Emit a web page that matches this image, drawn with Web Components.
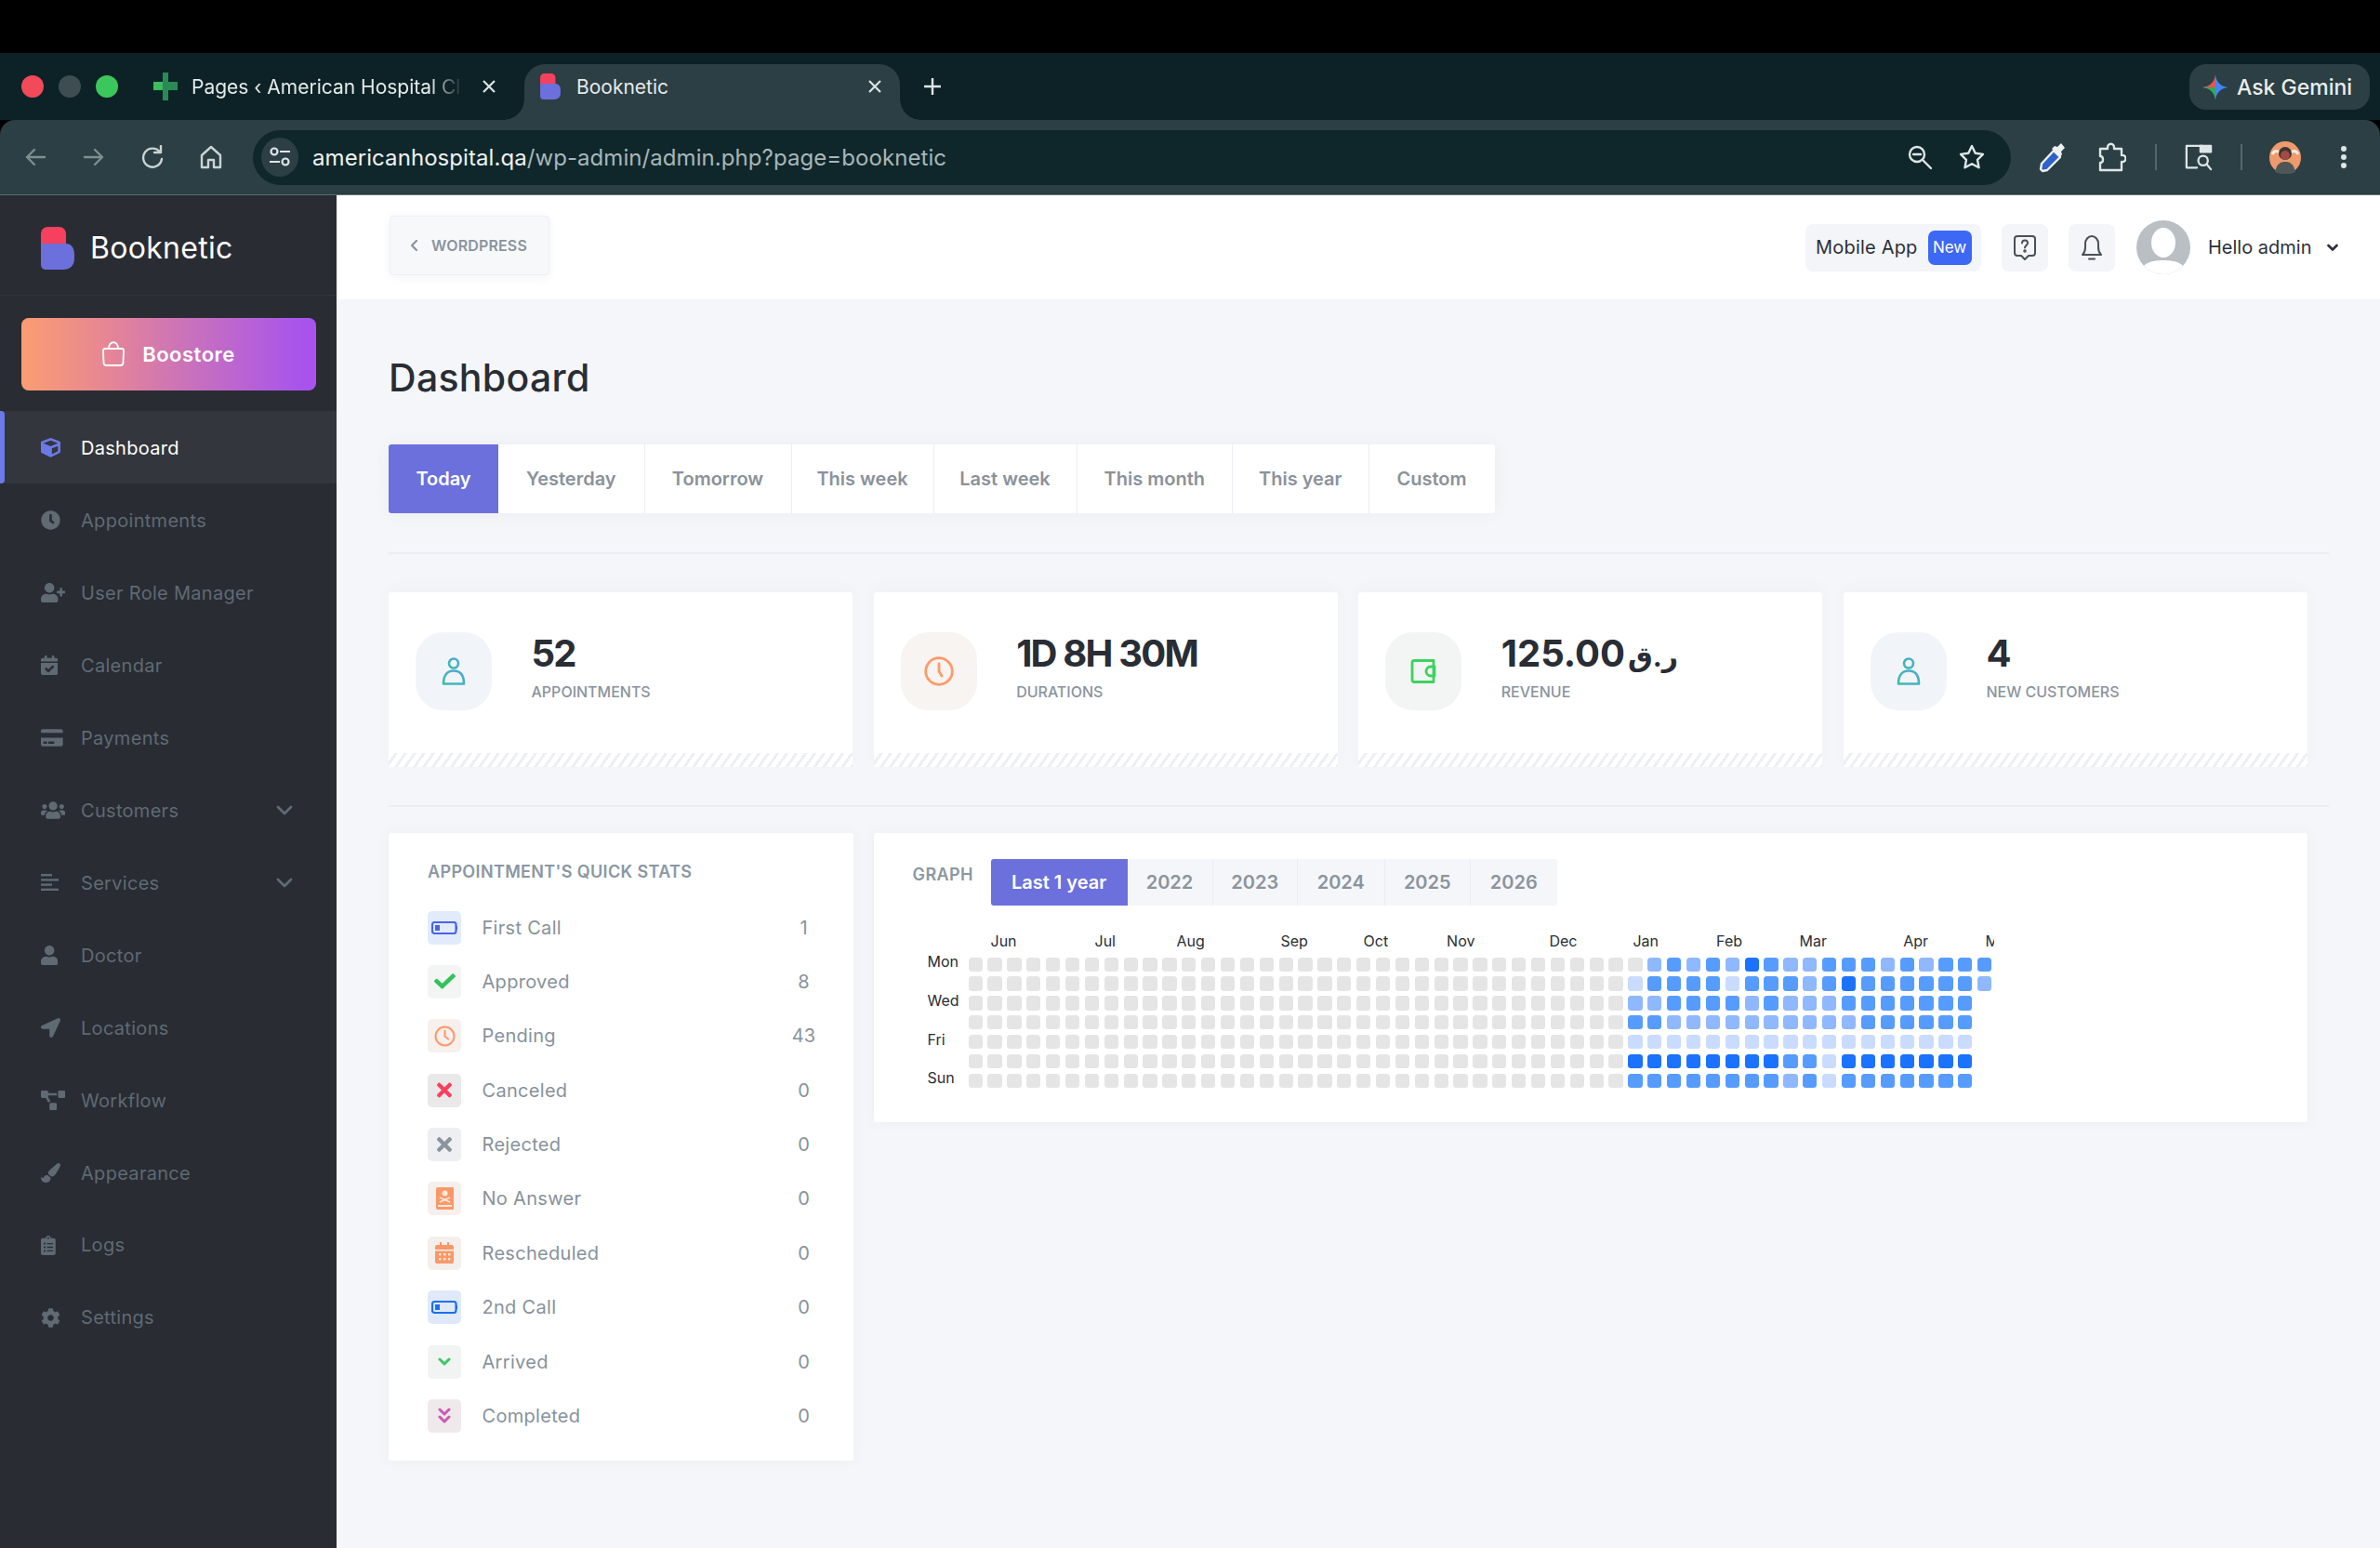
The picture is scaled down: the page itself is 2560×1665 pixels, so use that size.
<!DOCTYPE html>
<html lang="en">
<head>
<meta charset="utf-8">
<title>Booknetic</title>
<style>
  html, body { margin: 0; padding: 0; height: 100%; overflow: hidden; background: #f5f6f9; }
  body { font-family: Inter, "DejaVu Sans", sans-serif; }
  .page { display: flex; flex-direction: column; height: 1665px; width: 2560px; }
  .app { display: flex; flex: 1; min-height: 0; }
  .main { flex: 1; min-width: 0; display: flex; flex-direction: column; }
</style>
</head>
<body>
<div class="page">
  <browser-chrome></browser-chrome>
  <div class="app">
    <app-sidebar>
      <side-item icon="cube" active>Dashboard</side-item>
      <side-item icon="clock">Appointments</side-item>
      <side-item icon="userplus">User Role Manager</side-item>
      <side-item icon="calendar">Calendar</side-item>
      <side-item icon="card">Payments</side-item>
      <side-item icon="users" more>Customers</side-item>
      <side-item icon="lines" more>Services</side-item>
      <side-item icon="user">Doctor</side-item>
      <side-item icon="arrow">Locations</side-item>
      <side-item icon="flow">Workflow</side-item>
      <side-item icon="brush">Appearance</side-item>
      <side-item icon="logs">Logs</side-item>
      <side-item icon="cog">Settings</side-item>
    </app-sidebar>
    <div class="main">
      <top-bar></top-bar>
      <dash-board>
        <stat-card slot="cards" kind="person" tint="#f1f4f9"><span slot="value">52</span>APPOINTMENTS</stat-card>
        <stat-card slot="cards" kind="clock" tint="#f7f4f1"><span slot="value">1D 8H 30M</span>DURATIONS</stat-card>
        <stat-card slot="cards" kind="wallet" tint="#f3f5f5"><span slot="value" style="letter-spacing:-3.4px">125.00<span style="font-size:30px;letter-spacing:0;margin-left:3px">ر.ق</span></span>REVENUE</stat-card>
        <stat-card slot="cards" kind="person" tint="#f1f4f9"><span slot="value">4</span>NEW CUSTOMERS</stat-card>
        <quick-stats slot="stats">
          <stat-row kind="call1" tint="#e2ebfb" count="1">First Call</stat-row>
          <stat-row kind="check" tint="#f3f5f4" count="8">Approved</stat-row>
          <stat-row kind="clock" tint="#f7f0ed" count="43">Pending</stat-row>
          <stat-row kind="cancel" tint="#e9e9ea" count="0">Canceled</stat-row>
          <stat-row kind="reject" tint="#eeeff3" count="0">Rejected</stat-row>
          <stat-row kind="book" tint="#f5f0ee" count="0">No Answer</stat-row>
          <stat-row kind="cal" tint="#f5efec" count="0">Rescheduled</stat-row>
          <stat-row kind="call2" tint="#dfe9fa" count="0">2nd Call</stat-row>
          <stat-row kind="down" tint="#f2f4f3" count="0">Arrived</stat-row>
          <stat-row kind="down2" tint="#efe9ec" count="0">Completed</stat-row>
        </quick-stats>
        <heat-graph slot="graph"></heat-graph>
      </dash-board>
    </div>
  </div>
</div>
<script>
const fa = (w, d) => `<svg viewBox="0 0 ${w} 512" height="21" width="${w * 21 / 512}" fill="currentColor"><path d="${d}"/></svg>`;

const SIDE_ICONS = {
  cube: fa(512, 'M239.1 6.3l-208 78c-18.7 7-31.1 25-31.1 45v225.1c0 18.2 10.3 34.8 26.5 42.9l208 104c13.5 6.8 29.4 6.8 42.9 0l208-104c16.3-8.1 26.5-24.8 26.5-42.9V129.3c0-20-12.4-37.9-31.1-44.9l-208-78C262 2.2 250 2.2 239.1 6.3zM256 68.4l192 72v1.1l-192 78-192-78v-1.1l192-72zm32 356V275.5l160-65v133.9l-160 80z'),
  clock: fa(512, 'M256,8C119,8,8,119,8,256S119,504,256,504,504,393,504,256,393,8,256,8Zm92.49,313h0l-20,25a16,16,0,0,1-22.49,2.5h0l-67-49.72a40,40,0,0,1-15-31.23V112a16,16,0,0,1,16-16h32a16,16,0,0,1,16,16V256l58,42.5A16,16,0,0,1,348.49,321Z'),
  userplus: fa(640, 'M624 208h-64v-64c0-8.8-7.2-16-16-16h-32c-8.8 0-16 7.2-16 16v64h-64c-8.8 0-16 7.2-16 16v32c0 8.8 7.2 16 16 16h64v64c0 8.8 7.2 16 16 16h32c8.8 0 16-7.2 16-16v-64h64c8.8 0 16-7.2 16-16v-32c0-8.8-7.2-16-16-16zm-400 48c70.7 0 128-57.3 128-128S294.7 0 224 0 96 57.3 96 128s57.3 128 128 128zm89.6 32h-16.7c-22.2 10.2-46.9 16-72.9 16s-50.6-5.8-72.9-16h-16.7C60.2 288 0 348.2 0 422.4V464c0 26.5 21.5 48 48 48h352c26.5 0 48-21.5 48-48v-41.6c0-74.2-60.2-134.4-134.4-134.4z'),
  calendar: fa(448, 'M436 160H12c-6.6 0-12-5.4-12-12v-36c0-26.5 21.5-48 48-48h48V12c0-6.6 5.4-12 12-12h40c6.6 0 12 5.4 12 12v52h128V12c0-6.6 5.4-12 12-12h40c6.6 0 12 5.4 12 12v52h48c26.5 0 48 21.5 48 48v36c0 6.6-5.4 12-12 12zM12 192h424c6.6 0 12 5.4 12 12v260c0 26.5-21.5 48-48 48H48c-26.5 0-48-21.5-48-48V204c0-6.6 5.4-12 12-12zm333.3 95.9l-28.2-28.4c-4.7-4.7-12.3-4.7-17-.1L194.8 364l-45.8-46.2c-4.7-4.7-12.3-4.7-17-.1l-28.4 28.2c-4.7 4.7-4.7 12.3-.1 17l82.6 83.3c4.7 4.7 12.3 4.7 17 .1l142.1-140.9c4.7-4.7 4.7-12.3.1-17z'),
  card: fa(576, 'M0 432c0 26.5 21.5 48 48 48h480c26.5 0 48-21.5 48-48V256H0v176zm192-68c0-6.6 5.4-12 12-12h136c6.6 0 12 5.4 12 12v40c0 6.6-5.4 12-12 12H204c-6.6 0-12-5.4-12-12v-40zm-128 0c0-6.6 5.4-12 12-12h72c6.6 0 12 5.4 12 12v40c0 6.6-5.4 12-12 12H76c-6.6 0-12-5.4-12-12v-40zM576 80v48H0V80c0-26.5 21.5-48 48-48h480c26.5 0 48 21.5 48 48z'),
  users: fa(640, 'M96 224c35.3 0 64-28.7 64-64s-28.7-64-64-64-64 28.7-64 64 28.7 64 64 64zm448 0c35.3 0 64-28.7 64-64s-28.7-64-64-64-64 28.7-64 64 28.7 64 64 64zm32 32h-64c-17.6 0-33.5 7.1-45.1 18.6 40.3 22.1 68.9 62 75.1 109.4h66c17.7 0 32-14.3 32-32v-32c0-35.3-28.7-64-64-64zm-256 0c61.9 0 112-50.1 112-112S381.9 32 320 32 208 82.1 208 144s50.1 112 112 112zm76.8 32h-8.3c-20.8 10-43.9 16-68.5 16s-47.6-6-68.5-16h-8.3C179.6 288 128 339.6 128 403.2V432c0 26.5 21.5 48 48 48h288c26.5 0 48-21.5 48-48v-28.8c0-63.6-51.6-115.2-115.2-115.2zm-223.7-13.4C161.5 263.1 145.6 256 128 256H64c-35.3 0-64 28.7-64 64v32c0 17.7 14.3 32 32 32h65.9c6.3-47.4 34.9-87.3 75.2-109.4z'),
  lines: `<svg viewBox="0 0 19 21" height="21" width="19" fill="currentColor"><rect y="1" width="12" height="2.4"/><rect y="6.2" width="19" height="2.4"/><rect y="11.4" width="12" height="2.4"/><rect y="16.6" width="19" height="2.4"/></svg>`,
  user: fa(448, 'M224 256c70.7 0 128-57.3 128-128S294.7 0 224 0 96 57.3 96 128s57.3 128 128 128zm89.6 32h-16.7c-22.2 10.2-46.9 16-72.9 16s-50.6-5.8-72.9-16h-16.7C60.2 288 0 348.2 0 422.4V464c0 26.5 21.5 48 48 48h352c26.5 0 48-21.5 48-48v-41.6c0-74.2-60.2-134.4-134.4-134.4z'),
  arrow: fa(512, 'M444.52 3.52L28.74 195.42c-47.97 22.39-31.98 92.75 19.19 92.75h175.91v175.91c0 51.17 70.36 67.17 92.75 19.19l191.9-415.78c15.99-38.39-25.59-79.97-63.97-63.97z'),
  flow: fa(640, 'M384 320H256c-17.67 0-32 14.33-32 32v128c0 17.67 14.33 32 32 32h128c17.67 0 32-14.33 32-32V352c0-17.67-14.33-32-32-32zM192 32c0-17.67-14.33-32-32-32H32C14.33 0 0 14.33 0 32v128c0 17.67 14.33 32 32 32h95.72l73.16 128.04C211.98 300.98 232.4 288 256 288h.28L192 175.51V128h224V64H192V32zM608 0H480c-17.67 0-32 14.33-32 32v128c0 17.67 14.33 32 32 32h128c17.67 0 32-14.33 32-32V32c0-17.67-14.33-32-32-32z'),
  brush: fa(512, 'M167.02 309.34c-40.12 2.58-76.53 17.86-97.19 72.3-2.35 6.21-8 9.98-14.59 9.98-11.11 0-45.46-27.67-55.25-34.35C0 439.62 37.93 512 128 512c75.86 0 128-43.77 128-120.19 0-3.11-.65-6.08-.97-9.13l-88.01-73.34zM457.89 0c-15.16 0-29.37 6.71-40.21 16.45C213.27 199.05 192 203.34 192 257.09c0 13.7 3.25 26.76 8.73 38.7l63.82 53.18c7.21 1.8 14.64 3.03 22.39 3.03 62.11 0 98.11-45.47 211.16-256.46 7.38-14.35 13.9-29.85 13.9-45.99C512 20.64 486 0 457.89 0z'),
  logs: fa(384, 'M336 64h-80c0-35.3-28.7-64-64-64s-64 28.7-64 64H48C21.5 64 0 85.5 0 112v352c0 26.5 21.5 48 48 48h288c26.5 0 48-21.5 48-48V112c0-26.5-21.5-48-48-48zM96 424c-13.3 0-24-10.7-24-24s10.7-24 24-24 24 10.7 24 24-10.7 24-24 24zm0-96c-13.3 0-24-10.7-24-24s10.7-24 24-24 24 10.7 24 24-10.7 24-24 24zm0-96c-13.3 0-24-10.7-24-24s10.7-24 24-24 24 10.7 24 24-10.7 24-24 24zm96-192c13.3 0 24 10.7 24 24s-10.7 24-24 24-24-10.7-24-24 10.7-24 24-24zm128 368c0 4.4-3.6 8-8 8H168c-4.4 0-8-3.6-8-8v-16c0-4.4 3.6-8 8-8h144c4.4 0 8 3.6 8 8v16zm0-96c0 4.4-3.6 8-8 8H168c-4.4 0-8-3.6-8-8v-16c0-4.4 3.6-8 8-8h144c4.4 0 8 3.6 8 8v16zm0-96c0 4.4-3.6 8-8 8H168c-4.4 0-8-3.6-8-8v-16c0-4.4 3.6-8 8-8h144c4.4 0 8 3.6 8 8v16z'),
  cog: fa(512, 'M487.4 315.7l-42.6-24.6c4.3-23.2 4.3-47 0-70.2l42.6-24.6c4.9-2.8 7.1-8.6 5.5-14-11.1-35.6-30-67.8-54.7-94.6-3.8-4.1-10-5.1-14.8-2.3L380.8 110c-17.9-15.4-38.5-27.3-60.8-35.1V25.8c0-5.6-3.9-10.5-9.4-11.7-36.7-8.2-74.3-7.8-109.2 0-5.5 1.2-9.4 6.1-9.4 11.7V75c-22.2 7.9-42.8 19.8-60.8 35.1L88.7 85.5c-4.9-2.8-11-1.9-14.8 2.3-24.7 26.7-43.6 58.9-54.7 94.6-1.7 5.4.6 11.2 5.5 14L67.3 221c-4.3 23.2-4.3 47 0 70.2l-42.6 24.6c-4.9 2.8-7.1 8.6-5.5 14 11.1 35.6 30 67.8 54.7 94.6 3.8 4.1 10 5.1 14.8 2.3l42.6-24.6c17.9 15.4 38.5 27.3 60.8 35.1v49.2c0 5.6 3.9 10.5 9.4 11.7 36.7 8.2 74.3 7.8 109.2 0 5.5-1.2 9.4-6.1 9.4-11.7v-49.2c22.2-7.9 42.8-19.8 60.8-35.1l42.6 24.6c4.9 2.8 11 1.9 14.8-2.3 24.7-26.7 43.6-58.9 54.7-94.6 1.5-5.5-.7-11.3-5.6-14.1zM256 336c-44.1 0-80-35.9-80-80s35.9-80 80-80 80 35.9 80 80-35.9 80-80 80z')
};

const LOGO = `<svg viewBox="0 0 36 46" width="36" height="46"><path d="M0 18V8C0 3 3 0 8 0h11c5 0 8 3 8 8v10z" fill="#f5405f"/><path d="M0 18h27c6 0 9 5 9 12v4c0 8-5 12-12 12H6c-4 0-6-2-6-6z" fill="#6c70dc"/></svg>`;

class BrowserChrome extends HTMLElement {
  constructor() {
    super();
    this.attachShadow({ mode: 'open' });
  }

  connectedCallback() {
    const stroke = 'fill="none" stroke="currentColor" stroke-width="2.4" stroke-linecap="round" stroke-linejoin="round"';
    this.shadowRoot.innerHTML = `
      <style>
        :host { display: block; font-family: Inter, "DejaVu Sans", sans-serif; background: #000; padding-top: 57px; }
        .strip { height: 72px; background: #0d2226; display: flex; align-items: flex-end; box-sizing: border-box; position: relative; }
        .lights { display: flex; gap: 16px; margin: 0 0 24px 23px; }
        .lights i { width: 24px; height: 24px; border-radius: 50%; }
        .tab { height: 60px; display: flex; align-items: center; box-sizing: border-box; padding-bottom: 12px; color: #e4e9ea; font-size: 21px; position: relative; }
        .tab.one { width: 424px; margin-left: 13px; padding-left: 25px; }
        .tab.one .label { width: 292px; white-space: nowrap; margin-left: 15px;
          -webkit-mask-image: linear-gradient(90deg, #000 88%, transparent); }
        .tab.one .x { margin-left: 16px; }
        .tab.two { width: 404px; background: #2b3f44; border-radius: 22px 22px 0 0; padding-left: 17px; }
        .tab.two .label { width: 309px; margin-left: 17px; }
        .tab.two::before, .tab.two::after { content: ''; position: absolute; bottom: 0; width: 22px; height: 22px; }
        .tab.two::before { left: -22px; background: radial-gradient(circle at 0 0, transparent 21.5px, #2b3f44 22px); }
        .tab.two::after { right: -22px; background: radial-gradient(circle at 100% 0, transparent 21.5px, #2b3f44 22px); }
        .x { width: 24px; display: flex; justify-content: center; }
        .plus { margin: 0 0 12px 25px; width: 24px; height: 48px; display: flex; align-items: center; color: #dfe5e6; }
        .gemini { position: absolute; right: 11px; top: 12px; height: 49px; width: 194px; border-radius: 18px; background: #2b3f44; display: flex; align-items: center;
          box-sizing: border-box; padding-left: 14px; gap: 9px; color: #e9eded; font-size: 23px; font-weight: 500; }
        .bar { height: 81px; box-sizing: border-box; background: #2b3f44; border-radius: 16px 16px 0 0; border-bottom: 1px solid #5d6b6e; display: flex; align-items: center; padding-left: 6px; color: #cbd3d4; margin-top: 0; }
        .nav { width: 63px; display: flex; justify-content: center; }
        .nav.dim { color: #7f8e91; }
        .url { margin-left: 14px; width: 1891px; height: 59px; box-sizing: border-box; background: #0f272b; border-radius: 30px; display: flex; align-items: center; padding: 0 27px 0 9px; }
        .info { width: 40px; height: 42px; border-radius: 50%; background: #2b3f44; display: flex; align-items: center; justify-content: center; color: #dfe5e6; }
        .addr { margin-left: 15px; font-size: 24px; letter-spacing: .07px; color: #a9b6b8; flex: 1; white-space: nowrap; }
        .addr b { font-weight: 400; color: #eef2f2; }
        .url .ic { margin-left: 26px; width: 30px; display: flex; justify-content: center; color: #dfe5e6; }
        .tool { display: flex; justify-content: center; color: #dfe5e6; }
        .div { width: 2px; height: 28px; background: #55666a; }
      </style>
      <div class="strip">
        <div class="lights"><i style="background:#f2495b"></i><i style="background:#3e4d52"></i><i style="background:#3cc75c"></i></div>
        <div class="tab one">
          <svg width="26" height="30" viewBox="0 0 26 30"><path d="M10 0h6v10h10v9H16v11h-6V19H0v-9h10z" fill="#3dbb5f"/><path d="M10 0h6v10h10v9H16v11h-6V19z" fill="#2a8a55"/></svg>
          <span class="label">Pages ‹ American Hospital Cl</span>
          <span class="x"><svg width="16" height="16" viewBox="0 0 16 16" fill="none" stroke="#dde3e4" stroke-width="2.2"><path d="M2 2l12 12M14 2L2 14"/></svg></span>
        </div>
        <div class="tab two">
          <svg viewBox="0 0 36 46" width="22" height="28"><path d="M0 18V8C0 3 3 0 8 0h11c5 0 8 3 8 8v10z" fill="#f5405f"/><path d="M0 18h27c6 0 9 5 9 12v4c0 8-5 12-12 12H6c-4 0-6-2-6-6z" fill="#6c70dc"/></svg>
          <span class="label">Booknetic</span>
          <span class="x"><svg width="16" height="16" viewBox="0 0 16 16" fill="none" stroke="#dde3e4" stroke-width="2.2"><path d="M2 2l12 12M14 2L2 14"/></svg></span>
        </div>
        <div class="plus"><svg width="20" height="20" viewBox="0 0 20 20" fill="none" stroke="currentColor" stroke-width="2.4"><path d="M10 1v18M1 10h18"/></svg></div>
        <div class="gemini">
          <svg width="28" height="28" viewBox="0 0 28 28"><path d="M14 0C14.5 8 20 13.5 28 14 20 14.5 14.5 20 14 28 13.5 20 8 14.5 0 14 8 13.5 13.500 8 14 0z" fill="#4285f4"/><path d="M14 0C13.500 8 8 13.500 0 14h14z" fill="#e9544a"/><path d="M0 14c8 .5 13.500 6 14 14V14z" fill="#34a853"/></svg>
          <span>Ask Gemini</span>
        </div>
      </div>
      <div class="bar">
        <span class="nav dim"><svg width="24" height="24" viewBox="0 0 24 24" ${stroke}><path d="M22 12H3M11 4l-8 8 8 8"/></svg></span>
        <span class="nav dim"><svg width="24" height="24" viewBox="0 0 24 24" ${stroke}><path d="M2 12h19M13 4l8 8-8 8"/></svg></span>
        <span class="nav"><svg width="24" height="26" viewBox="0 0 24 26" ${stroke}><path d="M20 7.500A10 10 0 1 0 22 15M21 1v7h-7"/></svg></span>
        <span class="nav"><svg width="24" height="26" viewBox="0 0 24 26" ${stroke}><path d="M2 11L12 2l10 9v13h-7v-8H9v8H2z"/></svg></span>
        <div class="url">
          <span class="info"><svg width="26" height="26" viewBox="0 0 26 26" fill="none" stroke="currentColor" stroke-width="2.2"><circle cx="7" cy="7" r="3.500"/><path d="M13 7h11M2 18h11"/><circle cx="19" cy="18" r="3.500"/></svg></span>
          <span class="addr"><b>americanhospital.qa</b>/wp-admin/admin.php?page=booknetic</span>
          <span class="ic"><svg width="28" height="28" viewBox="0 0 28 28" ${stroke}><circle cx="11" cy="11" r="8"/><path d="M7 11h8M17 17l9 9"/></svg></span>
          <span class="ic"><svg width="28" height="28" viewBox="0 0 28 28" ${stroke}><path d="M14 2l3.700 7.800 8.300 1.100-6 5.900 1.500 8.500L14 21.200 6.500 25.300 8 16.800 2 10.900l8.300-1.100z"/></svg></span>
        </div>
        <span class="tool" style="margin-left:29px;width:32px"><svg width="30" height="34" viewBox="0 0 30 34" fill="none"><path d="M4 32l-2-2 1-6L16 10l7 7L9 31z" fill="#2f62c9" stroke="#eef1f2" stroke-width="2.4" stroke-linejoin="round"/><path d="M14 8l9 9 2-3-1-3 4-4-4-5-4 4-3-1z" fill="#eef1f2"/></svg></span>
        <span class="tool" style="margin-left:32px;width:32px"><svg width="30" height="32" viewBox="0 0 30 32" ${stroke}><path d="M2 7h8c-1-7 8-7 7 0h8v7c6-1 6 8 0 7v9H2v-8c4 0 4-7 0-7z"/></svg></span>
        <span class="div" style="margin-left:30px"></span>
        <span class="tool" style="margin-left:30px;width:30px"><svg width="32" height="32" viewBox="0 0 32 32" ${stroke}><path d="M14 28H2V3h18"/><path d="M18 3h12v7H18z" fill="currentColor"/><circle cx="21" cy="20" r="5.500"/><path d="M25 24l5 6"/></svg></span>
        <span class="div" style="margin-left:30px"></span>
        <span class="tool" style="margin-left:29px;width:34px"><svg width="34" height="35" viewBox="0 0 34 35"><ellipse cx="17" cy="17.500" rx="17" ry="17.500" fill="#ee9a6c"/><path d="M3 14c3-6 8-3 9 0M31 14c-3-6-8-3-9 0" stroke="#fbe9dd" stroke-width="3" fill="none"/><circle cx="17" cy="13" r="7" fill="#3d3431"/><circle cx="17" cy="15" r="5" fill="#a24a43"/><path d="M6 33c2-9 6-11 11-11s9 2 11 11c-6 3-16 3-22 0z" fill="#4e5658"/></svg></span>
        <span class="tool" style="margin-left:36px;width:20px"><svg width="8" height="26" viewBox="0 0 8 26" fill="currentColor"><circle cx="4" cy="4" r="3"/><circle cx="4" cy="13" r="3"/><circle cx="4" cy="22" r="3"/></svg></span>
      </div>
    `;
  }
}

class AppSidebar extends HTMLElement {
  constructor() {
    super();
    this.attachShadow({ mode: 'open' });
  }

  connectedCallback() {
    this.shadowRoot.innerHTML = `
      <style>
        :host { display: block; width: 362px; flex: none; background: #292c33; }
        .head { height: 108px; box-sizing: border-box; border-bottom: 1px solid #32353c; display: flex; align-items: center; padding: 6px 0 0 44px; gap: 17px; color: #fff; font-size: 32px; letter-spacing: .3px; }
        .boost { margin: 24px 22px 22px 23px; height: 78px; border-radius: 8px; background: linear-gradient(90deg, #fb9d72, #e58596 30%, #c66fc0 60%, #a854ec 95%);
          display: flex; align-items: center; justify-content: center; gap: 19px; color: #fff; font-size: 22px; font-weight: 600; letter-spacing: .5px; padding-bottom: 1px; box-sizing: border-box; }
        .items { display: flex; flex-direction: column; }
      </style>
      <div class="head">${LOGO}<span>Booknetic</span></div>
      <div class="boost">
        <svg width="24" height="27" viewBox="0 0 24 27" fill="none" stroke="#fff" stroke-width="1.800" stroke-linejoin="round"><path d="M3 8h18q2 0 2 2l-.5 13q0 3-3 3h-15q-3 0-3-3L1 10q0-2 2-2zM7 8c0-9 10-9 10 0"/></svg>
        <span>Boostore</span>
      </div>
      <div class="items"><slot></slot></div>
    `;
  }
}

class SideItem extends HTMLElement {
  constructor() {
    super();
    this.attachShadow({ mode: 'open' });
  }

  connectedCallback() {
    const more = this.hasAttribute('more');
    this.shadowRoot.innerHTML = `
      <style>
        :host { display: flex; height: 77.960px; align-items: center; box-sizing: border-box; padding: 2px 0 0 44px; position: relative;
          color: #5f6a73; font-size: 20px; letter-spacing: .3px; }
        :host([active]) { background: #33363c; color: #fff; }
        :host([active])::before { content: ''; position: absolute; left: 0; top: 0; bottom: 0; width: 5px; background: #6c7ae8; border-radius: 0 4px 4px 0; }
        .icon { width: 43px; flex: none; display: flex; align-items: center; }
        :host([active]) .icon { color: #6c7ae8; }
        .text { flex: 1; }
        .chev { margin-right: 47px; display: flex; }
      </style>
      <span class="icon">${SIDE_ICONS[this.getAttribute('icon')]}</span>
      <span class="text"><slot></slot></span>
      ${more ? '<span class="chev"><svg width="18" height="11" viewBox="0 0 18 11" fill="none" stroke="currentColor" stroke-width="2.800" stroke-linecap="round" stroke-linejoin="round"><path d="M2 2l7 7 7-7"/></svg></span>' : ''}
    `;
  }
}

class TopBar extends HTMLElement {
  constructor() {
    super();
    this.attachShadow({ mode: 'open' });
  }

  connectedCallback() {
    this.shadowRoot.innerHTML = `
      <style>
        :host { display: flex; height: 112px; flex: none; align-items: center; box-sizing: border-box; background: #fff; padding: 0 45px 0 57px; font-size: 20px; color: #2c3038; }
        .wp { width: 172px; height: 64px; box-sizing: border-box; margin-top: -5px; background: #f7f8fa; border: 1px solid #eef0f4; border-radius: 4px; box-shadow: 0 2px 10px rgba(80,90,120,.07);
          display: flex; align-items: center; padding-left: 22px; gap: 15px; color: #8a949e; font-size: 16px; font-weight: 600; letter-spacing: .15px; }
        .right { margin-left: auto; display: flex; align-items: center; }
        .app { height: 51px; width: 189px; box-sizing: border-box; border-radius: 8px; background: #f3f5f9; display: flex; align-items: center; padding-left: 11px; letter-spacing: .2px; white-space: nowrap; }
        .new { margin-left: 11px; width: 47px; height: 37px; border-radius: 7px; background: #3d67f5; color: #fff; font-size: 17px; display: flex; align-items: center; justify-content: center; letter-spacing: 0; }
        .sq { width: 50px; height: 51px; margin-left: 22px; border-radius: 8px; background: #f3f5f9; display: flex; align-items: center; justify-content: center; color: #4a5058; }
        .avatar { margin-left: 23px; width: 58px; height: 58px; display: flex; }
        .hello { margin-left: 19px; width: 115px; white-space: nowrap; }
        .caret { margin-left: 13px; display: flex; }
      </style>
      <div class="wp">
        <svg width="7" height="12" viewBox="0 0 7 12" fill="none" stroke="currentColor" stroke-width="2.200" stroke-linecap="round" stroke-linejoin="round"><path d="M6 1L1 6l5 5"/></svg>
        <span>WORDPRESS</span>
      </div>
      <div class="right">
        <div class="app"><span>Mobile App</span><span class="new">New</span></div>
        <div class="sq"><svg width="24" height="28" viewBox="0 0 24 28" fill="none" stroke="currentColor" stroke-width="2" stroke-linejoin="round"><path d="M4 2h16q3 0 3 3v15q0 3-3 3h-4l-4 4-4-4H4q-3 0-3-3V5q0-3 3-3z"/><path d="M9 9.500c0-4 6-4 6 0 0 2.500-3 2.500-3 5" stroke-linecap="round"/><circle cx="12" cy="18" r=".8"/></svg></div>
        <div class="sq"><svg width="24" height="28" viewBox="0 0 24 28" fill="none" stroke="currentColor" stroke-width="2" stroke-linecap="round" stroke-linejoin="round"><path d="M2 22c2-2 3-4 3-8V10c0-4 3-8 7-8s7 4 7 8v4c0 4 1 6 3 8z"/><path d="M9 26.500h6"/></svg></div>
        <div class="avatar"><svg viewBox="0 0 58 58" width="58" height="58"><defs><clipPath id="cl"><circle cx="29" cy="29" r="29"/></clipPath></defs><circle cx="29" cy="29" r="29" fill="#b9bfc3"/><g clip-path="url(#cl)" fill="#fff"><ellipse cx="29" cy="24" rx="13" ry="16"/><path d="M4 58c1-12 12-15 25-15s24 3 25 15z"/></g></svg></div>
        <span class="hello">Hello admin</span>
        <span class="caret"><svg width="12" height="9" viewBox="0 0 12 9" fill="none" stroke="#2c3038" stroke-width="2.600" stroke-linecap="round" stroke-linejoin="round"><path d="M1.500 2l4.500 4.500L10.500 2"/></svg></span>
      </div>
    `;
  }
}

class DashBoard extends HTMLElement {
  constructor() {
    super();
    this.attachShadow({ mode: 'open' });
  }

  connectedCallback() {
    const ranges = [['Today', 118], ['Yesterday', 157.5], ['Tomorrow', 158], ['This week', 153], ['Last week', 154], ['This month', 167.5], ['This year', 146.5], ['Custom', 135]];
    this.shadowRoot.innerHTML = `
      <style>
        :host { display: block; box-sizing: border-box; padding: 54px 55px 0 56px; flex: 1; min-height: 0; background: #f5f6f9; color: #292d35; }
        h1 { margin: 0; font-size: 41px; line-height: 60px; font-weight: 500; letter-spacing: .3px; }
        .ranges { margin-top: 42px; display: inline-grid; grid-template-columns: ${ranges.map(r => r[1] + 'px').join(' ')}; height: 74px; background: #fff; border-radius: 3px; box-shadow: 0 0 18px rgba(80,90,130,.06); vertical-align: top; }
        .ranges span { display: flex; align-items: center; justify-content: center; border-right: 1px solid #eaedf5; font-size: 20px; font-weight: 600; color: #8a929b; }
        .ranges span:last-child { border-right: 0; }
        .ranges .on { background: #6c70dc; color: #fff; border-radius: 3px 0 0 3px; border-right: 0; }
        .sep { height: 1.500px; background: #e9eef6; }
        .sep.a { margin-top: 42px; }
        .cards { margin: 41px 23px 0 0; display: grid; grid-template-columns: repeat(4, 1fr); gap: 22.500px; height: 188px; }
        .sep.b { margin-top: 41.500px; }
        .lower { margin: 28px 23px 0 0; display: grid; grid-template-columns: 499.500px 1fr; gap: 22.500px; align-items: start; }
      </style>
      <h1>Dashboard</h1>
      <div class="ranges">${ranges.map((r, i) => `<span class="${i === 0 ? 'on' : ''}">${r[0]}</span>`).join('')}</div>
      <div class="sep a"></div>
      <div class="cards"><slot name="cards"></slot></div>
      <div class="sep b"></div>
      <div class="lower"><slot name="stats"></slot><slot name="graph"></slot></div>
    `;
  }
}

class StatCard extends HTMLElement {
  constructor() {
    super();
    this.attachShadow({ mode: 'open' });
  }

  icon() {
    const kind = this.getAttribute('kind');
    if (kind === 'clock') {
      return `<svg width="32" height="32" viewBox="0 0 32 32" fill="none" stroke="#ff9a6a" stroke-width="2.800" stroke-linecap="round"><circle cx="16" cy="16" r="14.300"/><path d="M16 8v8l3 5"/></svg>`;
    }
    if (kind === 'wallet') {
      return `<svg width="28" height="26" viewBox="0 0 28 26" fill="none" stroke="#3dd25e" stroke-width="2.800" stroke-linejoin="round"><path d="M2 3.500q0-2 2-2h21v23H4q-2 0-2-2z"/><path d="M26 8h-4a4.500 4.500 0 0 0 0 10h4z"/></svg>`;
    }
    return `<svg width="26" height="30" viewBox="0 0 26 30" fill="none" stroke-width="2.600" stroke-linejoin="round"><defs><linearGradient id="pg" x1="0" y1="1" x2="1" y2="0"><stop offset="0" stop-color="#3cbcae"/><stop offset="1" stop-color="#4ea8d2"/></linearGradient></defs><circle cx="13" cy="6.500" r="5" stroke="url(#pg)"/><path d="M2 28.500c0-9 4-14 11-14s11 5 11 14z" stroke="url(#pg)"/></svg>`;
  }

  connectedCallback() {
    this.shadowRoot.innerHTML = `
      <style>
        :host { display: block; position: relative; background: #fff; border-radius: 3px 3px 0 0; box-shadow: 0 -6px 14px rgba(80,90,130,.03); font-family: Inter, "DejaVu Sans", sans-serif; }
        .body { height: 173.500px; box-sizing: border-box; display: flex; padding: 43px 0 0 29px; }
        .tile { width: 82px; height: 84px; flex: none; border-radius: 30px; background: ${this.getAttribute('tint')}; display: flex; align-items: center; justify-content: center; }
        .text { margin-left: 42.500px; display: flex; flex-direction: column; }
        .value { height: 46px; line-height: 46px; font-size: 40px; font-weight: 700; letter-spacing: -1.800px; color: #292d35; white-space: nowrap; }
        .label { margin-top: 7px; font-size: 16px; line-height: 22px; font-weight: 500; color: #8a949e; }
        .hatch { height: 14.500px; background: repeating-linear-gradient(125deg, #fff 0 5.200px, #eeeff2 5.200px 8.200px); }
      </style>
      <div class="body">
        <div class="tile">${this.icon()}</div>
        <div class="text">
          <div class="value"><slot name="value"></slot></div>
          <div class="label"><slot></slot></div>
        </div>
      </div>
      <div class="hatch"></div>
    `;
  }
}

class QuickStats extends HTMLElement {
  constructor() {
    super();
    this.attachShadow({ mode: 'open' });
  }

  connectedCallback() {
    this.shadowRoot.innerHTML = `
      <style>
        :host { display: block; box-sizing: border-box; height: 675px; background: #fff; border-radius: 3px; padding: 29px 0 0 42px; box-shadow: 0 0 16px rgba(80,90,130,.05); }
        h2 { margin: 0 0 29px; font-size: 18px; line-height: 26px; font-weight: 600; color: #8a97a3; letter-spacing: .35px; }
        .rows { display: flex; flex-direction: column; gap: 22.400px; }
      </style>
      <h2>APPOINTMENT'S QUICK STATS</h2>
      <div class="rows"><slot></slot></div>
    `;
  }
}

class StatRow extends HTMLElement {
  constructor() {
    super();
    this.attachShadow({ mode: 'open' });
  }

  icon() {
    const glyphs = {
      call1: `<svg width="28" height="14" viewBox="0 0 28 14"><rect x="1" y="1" width="25.500" height="12" rx="2.500" fill="none" stroke="#4a63e8" stroke-width="2.200"/><rect x="4" y="4" width="5" height="6" fill="#4a63e8"/><rect x="26" y="5" width="2" height="4" fill="#4a63e8"/></svg>`,
      call2: `<svg width="28" height="14" viewBox="0 0 28 14"><rect x="1" y="1" width="25.500" height="12" rx="2.500" fill="none" stroke="#1a6ff0" stroke-width="2.200"/><rect x="4" y="4" width="5" height="6" fill="#1a6ff0"/><rect x="26" y="5" width="2" height="4" fill="#1a6ff0"/></svg>`,
      check: `<svg width="23" height="17" viewBox="0 0 512 400" preserveAspectRatio="none" fill="#35c25a"><path transform="translate(0 -58)" d="M173.898 439.404l-166.4-166.4c-9.997-9.997-9.997-26.206 0-36.204l36.203-36.204c9.997-9.998 26.207-9.998 36.204 0L192 312.69 432.095 72.596c9.997-9.997 26.207-9.997 36.204 0l36.203 36.204c9.997 9.997 9.997 26.206 0 36.204l-294.4 294.401c-9.998 9.997-26.207 9.997-36.204-.001z"/></svg>`,
      clock: `<svg width="23" height="23" viewBox="0 0 23 23" fill="none" stroke="#ff9a6a" stroke-width="2" stroke-linecap="round"><circle cx="11.500" cy="11.500" r="10"/><path d="M11.500 5.500v6l3.500 3"/></svg>`,
      cancel: `<svg width="16" height="17" viewBox="0 0 352 352" fill="#f9405f"><path transform="translate(0 -80)" d="M242.72 256l100.07-100.07c12.28-12.28 12.28-32.19 0-44.48l-22.24-22.24c-12.28-12.28-32.19-12.28-44.48 0L176 189.28 75.93 89.21c-12.28-12.28-32.19-12.28-44.48 0L9.21 111.45c-12.28 12.28-12.28 32.19 0 44.48L109.28 256 9.21 356.07c-12.28 12.28-12.28 32.19 0 44.48l22.24 22.24c12.28 12.28 32.2 12.28 44.48 0L176 322.72l100.07 100.07c12.28 12.28 32.2 12.28 44.48 0l22.24-22.24c12.28-12.28 12.28-32.19 0-44.48L242.72 256z"/></svg>`,
      reject: `<svg width="16" height="16" viewBox="0 0 352 352" fill="#8a949e"><path transform="translate(0 -80)" d="M242.72 256l100.07-100.07c12.28-12.28 12.28-32.19 0-44.48l-22.24-22.24c-12.28-12.28-32.19-12.28-44.48 0L176 189.28 75.93 89.21c-12.28-12.28-32.19-12.28-44.48 0L9.21 111.45c-12.28 12.28-12.28 32.19 0 44.48L109.28 256 9.21 356.07c-12.28 12.28-12.28 32.19 0 44.48l22.24 22.24c12.28 12.28 32.2 12.28 44.48 0L176 322.72l100.07 100.07c12.28 12.28 32.2 12.28 44.48 0l22.24-22.24c12.28-12.28 12.28-32.19 0-44.48L242.72 256z"/></svg>`,
      book: `<svg width="20" height="24" viewBox="0 0 20 24"><path d="M1 2q0-2 2-2h17v24H3q-2 0-2-2z" fill="#fb9868"/><circle cx="10.500" cy="6.500" r="3" fill="#fdeadf"/><path d="M5 11l11 5M16 11L5 16" stroke="#fdeadf" stroke-width="1.500"/><rect x="3" y="19" width="15" height="2" fill="#fdeadf"/></svg>`,
      cal: `<svg width="20" height="23" viewBox="0 0 20 23"><path d="M5 0h2v3h6V0h2v3h3q2 0 2 2v3H0V5q0-2 2-2h3zM0 9.500h20V21q0 2-2 2H2q-2 0-2-2z" fill="#fb9868"/><g fill="#fdeadf"><rect x="4" y="12" width="2.400" height="2.400"/><rect x="9" y="12" width="2.400" height="2.400"/><rect x="14" y="12" width="2.400" height="2.400"/><rect x="4" y="17" width="2.400" height="2.400"/><rect x="9" y="17" width="2.400" height="2.400"/><rect x="14" y="17" width="2.400" height="2.400"/></g></svg>`,
      down: `<svg width="14" height="10" viewBox="0 0 14 10" fill="none" stroke="#3bc964" stroke-width="3" stroke-linecap="round" stroke-linejoin="round"><path d="M2 2l5 5 5-5"/></svg>`,
      down2: `<svg width="14" height="18" viewBox="0 0 14 18" fill="none" stroke="#c95bb4" stroke-width="3" stroke-linecap="round" stroke-linejoin="round"><path d="M2 2l5 5 5-5M2 10l5 5 5-5"/></svg>`
    };
    return glyphs[this.getAttribute('kind')];
  }

  connectedCallback() {
    this.shadowRoot.innerHTML = `
      <style>
        :host { display: flex; height: 36px; align-items: center; color: #87929c; font-size: 20px; letter-spacing: .3px; }
        .tile { width: 36px; height: 36px; border-radius: 5px; background: ${this.getAttribute('tint')}; display: flex; align-items: center; justify-content: center; flex: none; }
        .name { margin-left: 22.500px; flex: 1; }
        .num { width: 40px; text-align: center; margin-right: 33px; letter-spacing: 0; }
      </style>
      <span class="tile">${this.icon()}</span>
      <span class="name"><slot></slot></span>
      <span class="num">${this.getAttribute('count')}</span>
    `;
  }
}

class HeatGraph extends HTMLElement {
  constructor() {
    super();
    this.attachShadow({ mode: 'open' });
  }

  cells() {
    // coloured part of each row, from week 34 on; everything before it is grey
    const filled = [
      '0232324322333232333',
      '1333313332343333332',
      '223333232223333333',
      '332222222222333333',
      '111111111111111111',
      '444444443314444444',
      '333333332313333333'
    ];
    const colors = ['#e5e5e5', '#c9dcff', '#8fb8ff', '#569cff', '#1a72fe'];
    let out = '';
    for (let row = 0; row < 7; row++) {
      for (let col = 0; col < 53; col++) {
        const level = col < 34 ? 0 : filled[row][col - 34];
        if (level === undefined) continue;
        out += `<i style="grid-row:${row + 1};grid-column:${col + 1};background:${colors[level]}"></i>`;
      }
    }
    return out;
  }

  connectedCallback() {
    const years = [['Last 1 year', 147], ['2022', 92], ['2023', 91.5], ['2024', 93.5], ['2025', 92.500], ['2026', 92.500]];
    const months = [['Jun', 112], ['Jul', 88], ['Aug', 112], ['Sep', 89], ['Oct', 89.6], ['Nov', 110.4], ['Dec', 90], ['Jan', 89.6], ['Feb', 89.4], ['Mar', 111.7], ['Apr', 88.3], ['May', 10]];
    this.shadowRoot.innerHTML = `
      <style>
        :host { display: block; box-sizing: border-box; height: 311px; background: #fff; border-radius: 3px; padding: 28px 0 0 41.500px; box-shadow: 0 0 16px rgba(80,90,130,.05); }
        .top { display: flex; align-items: flex-start; }
        .title { width: 84px; font-size: 18px; font-weight: 600; line-height: 34px; color: #8a97a3; letter-spacing: .4px; }
        .years { display: grid; grid-template-columns: ${years.map(y => y[1] + 'px').join(' ')}; height: 50px; border-radius: 3px; background: #f5f6f9; }
        .years span { display: flex; align-items: center; justify-content: center; border-right: 1px solid #eaedf5; font-size: 20px; font-weight: 600; color: #8a949e; }
        .years span:last-child { border-right: 0; }
        .years .on { background: #6c70dc; color: #fff; border-radius: 3px 0 0 3px; border-right: 0; }
        .months { margin: 27px 0 7px 84px; display: flex; height: 22px; line-height: 22px; font-size: 16px; color: #2a2e35; }
        .months span { flex: none; overflow: hidden; white-space: nowrap; }
        .heat { display: flex; margin-left: 16px; }
        .days { width: 44px; display: grid; grid-auto-rows: 15.300px; row-gap: 5.570px; font-size: 16px; color: #2a2e35; }
        .days span { display: flex; align-items: center; margin-top: -3px; height: 15.300px; }
        .grid { display: grid; grid-template-columns: repeat(53, 15.300px); grid-auto-rows: 15.300px; column-gap: 5.590px; row-gap: 5.570px; }
        .grid i { border-radius: 3.500px; display: block; }
      </style>
      <div class="top">
        <div class="title">GRAPH</div>
        <div class="years">${years.map((y, i) => `<span class="${i === 0 ? 'on' : ''}">${y[0]}</span>`).join('')}</div>
      </div>
      <div class="months">${months.map(m => `<span style="width:${m[1]}px">${m[0]}</span>`).join('')}</div>
      <div class="heat">
        <div class="days"><span>Mon</span><span></span><span>Wed</span><span></span><span>Fri</span><span></span><span>Sun</span></div>
        <div class="grid">${this.cells()}</div>
      </div>
    `;
  }
}

customElements.define('browser-chrome', BrowserChrome);
customElements.define('app-sidebar', AppSidebar);
customElements.define('side-item', SideItem);
customElements.define('top-bar', TopBar);
customElements.define('dash-board', DashBoard);
customElements.define('stat-card', StatCard);
customElements.define('quick-stats', QuickStats);
customElements.define('stat-row', StatRow);
customElements.define('heat-graph', HeatGraph);
</script>
</body>
</html>
